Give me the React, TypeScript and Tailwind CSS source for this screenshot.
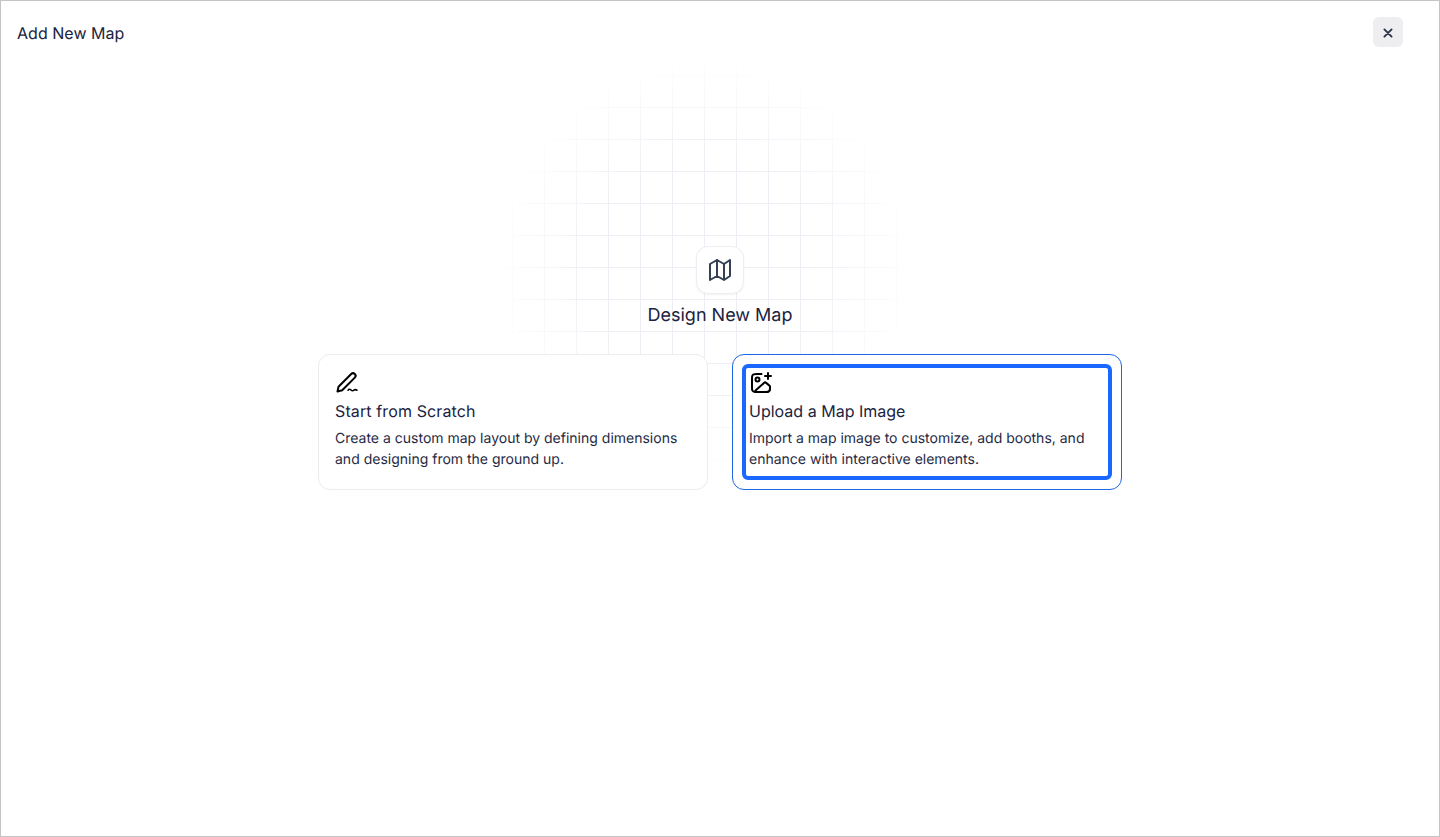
export default function App() {
  return (
    <div className="relative flex h-[837px] flex-col overflow-hidden border border-[#c4c4c4] bg-white font-['Inter',sans-serif] text-[#1a2340] antialiased [text-rendering:geometricPrecision]">
      <div className="flex h-[64px] shrink-0 items-center justify-between pl-4 pr-9">
        <h1 className="text-base leading-6 font-normal tracking-[0.03px]">Add New Map</h1>
        <button className="mb-[2px] flex h-[30px] w-[30px] items-center justify-center rounded-md bg-[#eeeef0] pt-[2px]">
          <svg width="16" height="16" viewBox="0 0 16 16" fill="none" stroke="#2d3348" strokeWidth="1.9" strokeLinecap="round">
            <path d="M4.4 4.4l7.2 7.2M11.6 4.4l-7.2 7.2" />
          </svg>
        </button>
      </div>

      {/* grid behind heading */}
      <div className="absolute top-[42px] left-[479px] h-[480px] w-[480px] bg-[linear-gradient(to_right,#eceef3_1px,transparent_1px),linear-gradient(to_bottom,#eceef3_1px,transparent_1px)] bg-[size:32px_32px] [mask-image:radial-gradient(circle_212px_at_224px_224px,black_50%,transparent_100%)]" />

      <div className="relative flex flex-col items-center pt-[181px]">
        <div className="flex h-12 w-12 items-center justify-center rounded-xl border border-[#eceef2] bg-white shadow-[0_1px_2px_rgba(16,24,40,0.05)]">
          <svg width="24" height="24" viewBox="0 0 24 24" fill="none" stroke="#344054" strokeWidth="2" strokeLinecap="round" strokeLinejoin="round">
            <path d="M9 18L2 22V6L9 2M9 18L16 22M9 18V2M16 22L22 18V2L16 6M16 22V6M16 6L9 2" />
          </svg>
        </div>
        <h2 className="mt-[8px] text-lg leading-7 font-normal">Design New Map</h2>

        <div className="mt-[24px] flex gap-6">
          <div className="flex h-[136px] w-[390px] flex-col rounded-xl border border-[#eaecf0] bg-white px-4 pt-[15px]">
            <svg width="24" height="24" viewBox="0 0 24 24" fill="none" stroke="#000" strokeWidth="2" strokeLinecap="round" strokeLinejoin="round">
              <path d="M2.5 21.5L3.5 16.8L16.2 4C17.2 3 18.8 3 19.8 4C20.8 5 20.8 6.6 19.8 7.6L7.2 20.3L2.5 21.5Z" />
              <path d="M13 20.2C14 19 15 19 16 20C17 21 18 21 19 20.2C20 19.4 21 19.6 22 20.2" strokeWidth="1.6" />
            </svg>
            <h3 className="mt-[5px] text-base leading-6 font-normal tracking-[0.12px]">Start from Scratch</h3>
            <p className="mt-[5px] text-sm leading-[21px] text-[#1f2a44]">
              Create a custom map layout by defining dimensions
              <br />
              and designing from the ground up.
            </p>
          </div>

          <div className="h-[136px] w-[390px] rounded-xl border border-[#1f66e8] bg-white p-[9px]">
            <div className="flex h-[116px] flex-col rounded-[6px] border-4 border-[#1a68ff] bg-white px-[3px] pt-[3px]">
              <svg width="24" height="24" viewBox="0 0 24 24" fill="none" stroke="#000" strokeWidth="2" strokeLinecap="round" strokeLinejoin="round">
                <path d="M12.5 3H7.8C6.12 3 5.28 3 4.64 3.33C4.07 3.61 3.61 4.07 3.33 4.64C3 5.28 3 6.12 3 7.8V16.2C3 17.88 3 18.72 3.33 19.36C3.61 19.93 4.07 20.39 4.64 20.67C5.28 21 6.12 21 7.8 21H17C17.93 21 18.4 21 18.78 20.9C19.81 20.62 20.62 19.81 20.9 18.78C21 18.4 21 17.93 21 17" />
                <path d="M19 8V2M16 5H22" />
                <circle cx="8.5" cy="8.5" r="2" />
                <path d="M15 12L6.5 19.6C6 20.1 5.8 20.3 5.8 20.5C5.8 20.7 5.9 20.8 6 20.9C6.2 21 6.5 21 7.1 21H16.5C18 21 18.7 21 19.3 20.8C20 20.5 20.5 20 20.8 19.2C21 18.7 21 18 21 16.5C21 16 21 15.8 21 15.6C20.9 15.3 20.8 15 20.6 14.8C20.4 14.6 20.3 14.4 19.9 14.1L17.1 11.9C16.7 11.5 16.5 11.3 16.3 11.3C16.1 11.2 15.9 11.2 15.7 11.3C15.5 11.4 15.3 11.6 15 12Z" />
              </svg>
              <h3 className="mt-[4px] text-base leading-6 font-normal tracking-[0.01px]">Upload a Map Image</h3>
              <p className="mt-[5px] text-sm leading-[21px] text-[#1f2a44]">
                Import a map image to customize, add booths, and
                <br />
                enhance with interactive elements.
              </p>
            </div>
          </div>
        </div>
      </div>
    </div>
  );
}
